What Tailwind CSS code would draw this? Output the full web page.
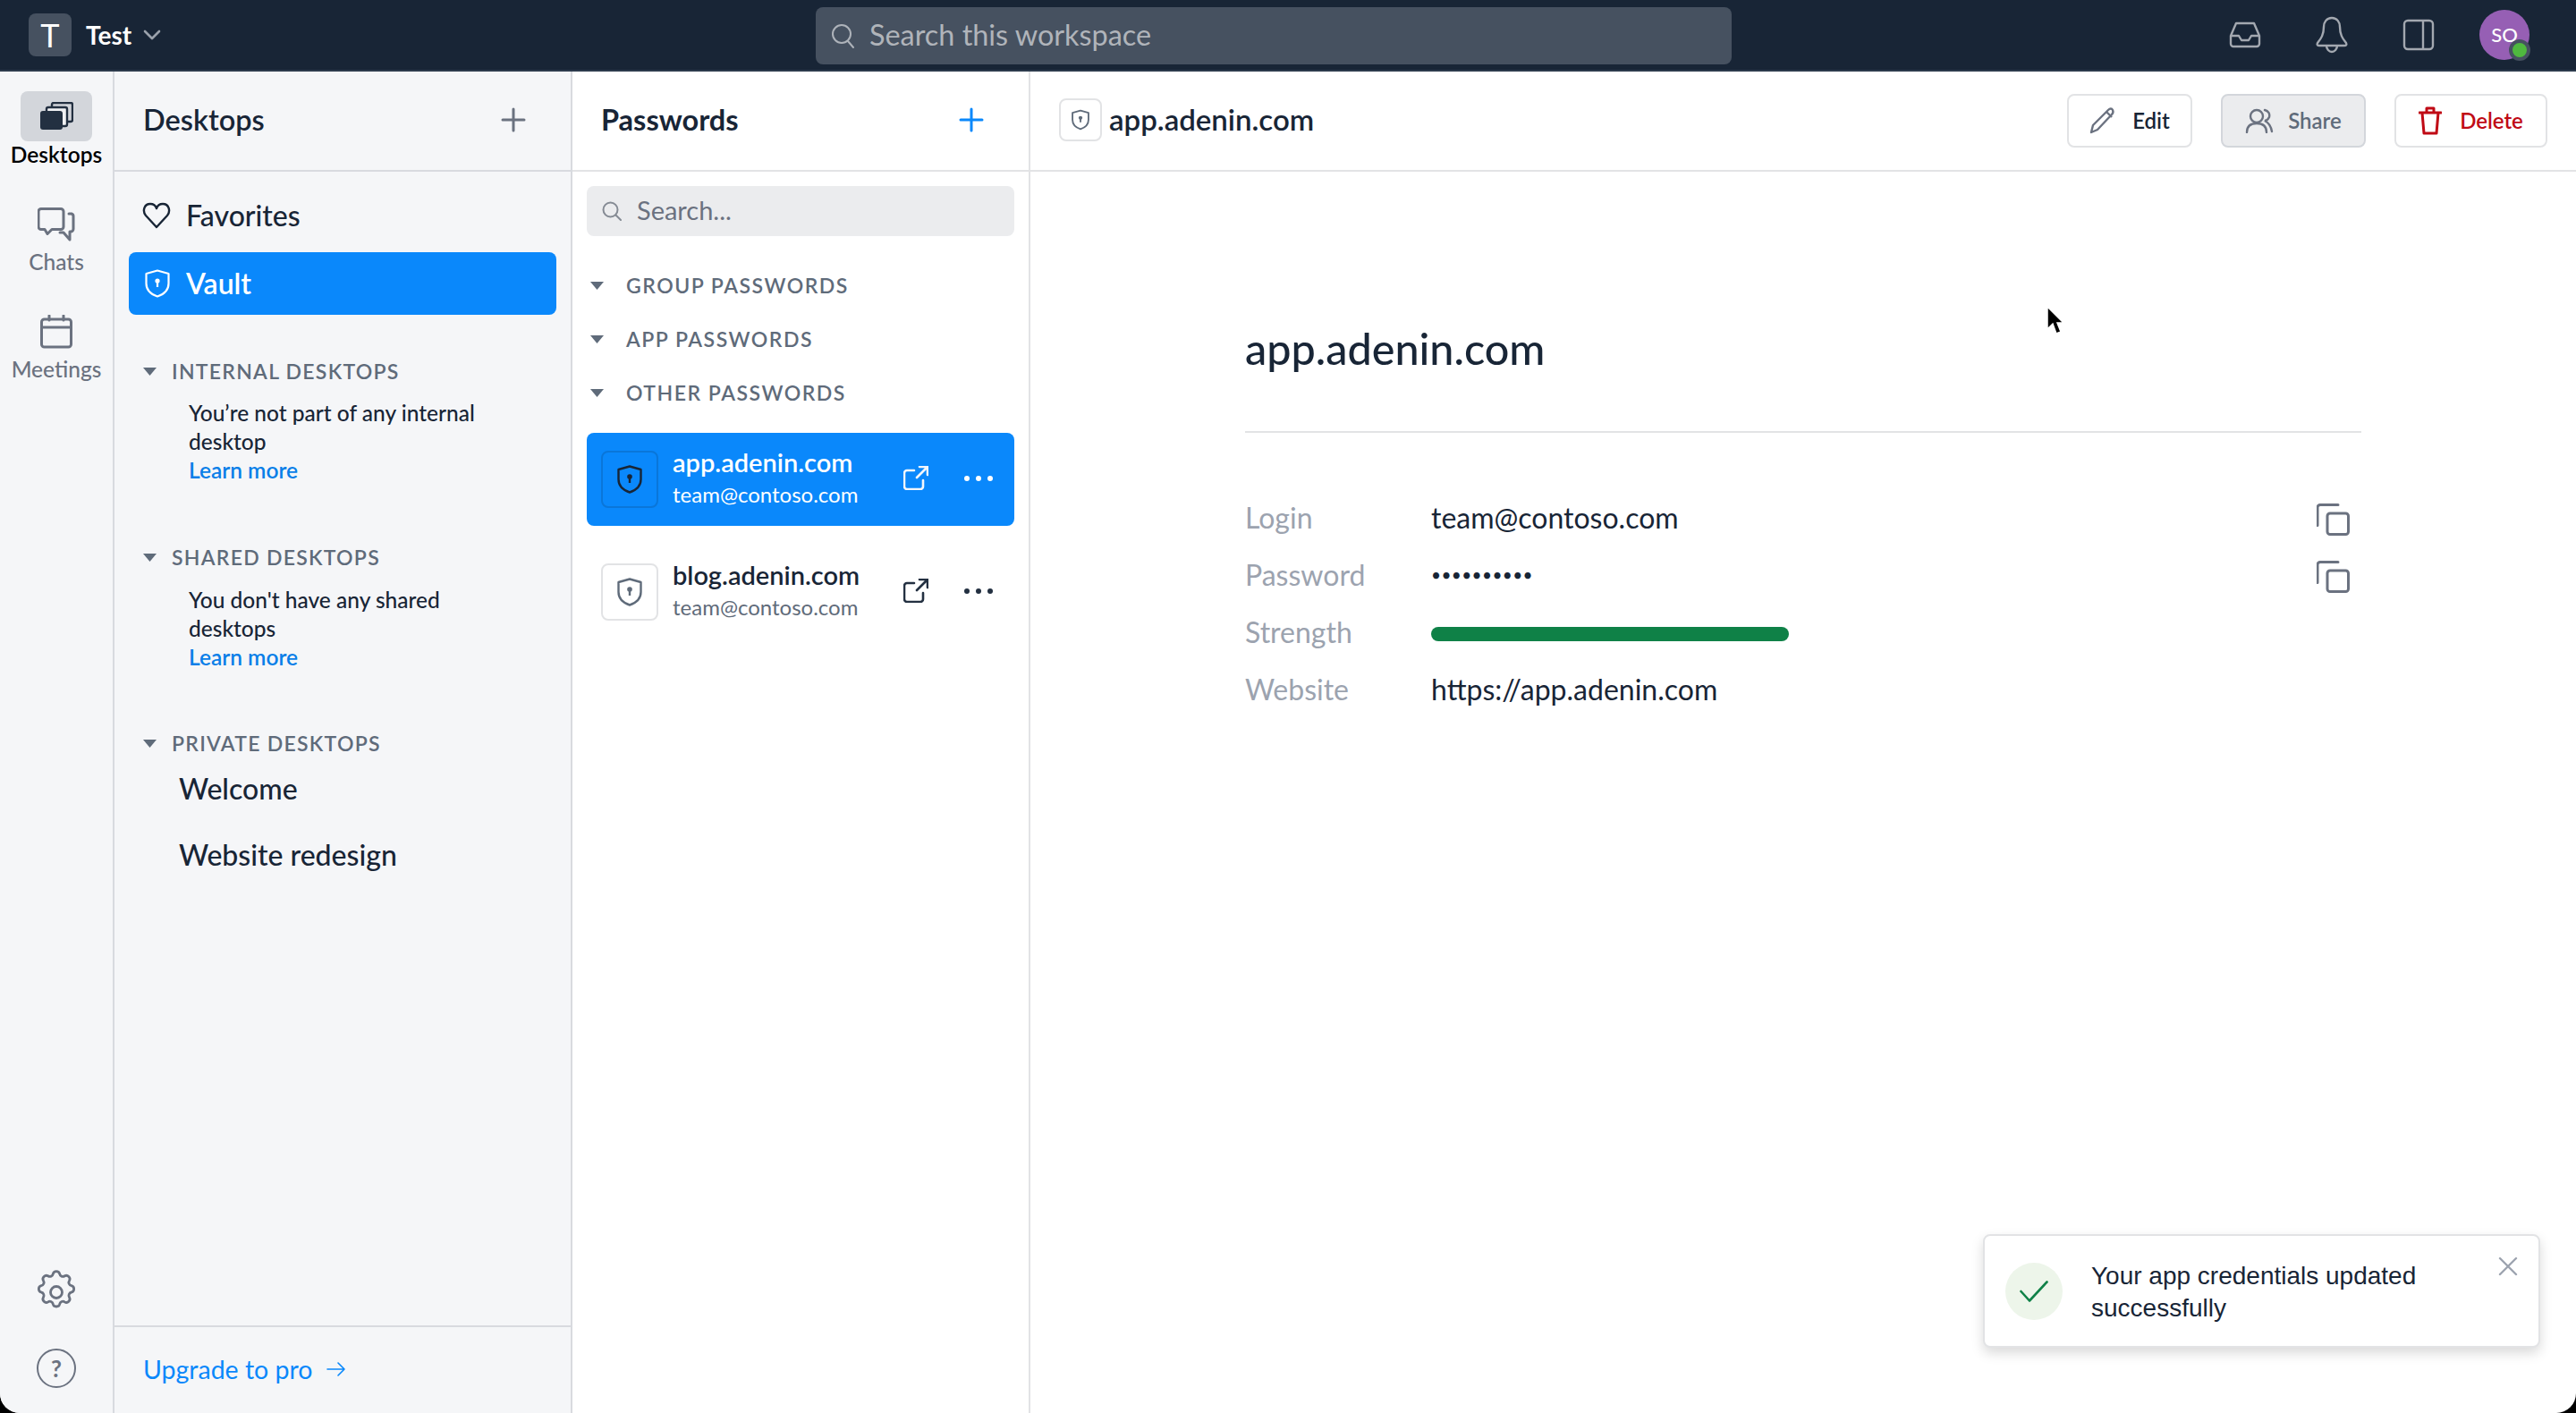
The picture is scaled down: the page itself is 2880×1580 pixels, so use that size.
<!doctype html>
<html><head><meta charset="utf-8"><script src="https://cdn.jsdelivr.net/npm/@tailwindcss/browser@4"></script></head>
<body class="bg-black m-0">
<div class="relative w-[2880px] h-[1580px] overflow-hidden bg-white rounded-b-[22px] flex flex-col font-['Lato',sans-serif] text-[#182536]">
  <!-- top bar -->
  <header class="h-[80px] shrink-0 bg-[#182536] border-b-2 border-[#2c3a4c] flex items-center pl-[32px] pr-[52px] relative">
    <div class="w-[48px] h-[48px] rounded-lg bg-[#465160] text-white text-[36px] flex items-center justify-center">T</div>
    <span class="ml-[16px] text-white text-[28px] font-bold">Test</span>
    <svg class="ml-[13px]" width="20" height="14" viewBox="0 0 20 14" fill="none" stroke="#9aa1ab" stroke-width="2.6" stroke-linecap="round" stroke-linejoin="round"><path d="M2 3l8 8 8-8"/></svg>
    <div class="absolute left-[912px] top-[8px] w-[1024px] h-[64px] rounded-lg bg-[#465160] flex items-center pl-[16px] gap-[14px]">
      <svg width="30" height="30" viewBox="0 0 30 30" fill="none" stroke="#aeb3ba" stroke-width="2" stroke-linecap="round"><circle cx="13" cy="13" r="10"/><path d="M20 21l6 7"/></svg>
      <span class="text-[32.400px] leading-[40px] pb-[3px] text-[#b0b4ba]">Search this workspace</span>
    </div>
    <div class="ml-auto flex items-center">
      <svg class="mr-[60px]" width="36" height="30" viewBox="0 0 36 30" fill="none" stroke="#a3a8b0" stroke-width="2.4" stroke-linejoin="round"><path d="M2 16 8 2h20l6 14v9a3 3 0 0 1-3 3H5a3 3 0 0 1-3-3z"/><path d="M2 16h9l3 5h8l3-5h9"/></svg>
      <svg class="mr-[60px]" width="38" height="42" viewBox="0 0 38 42" fill="none" stroke="#a3a8b0" stroke-width="2.4" stroke-linejoin="round"><path d="M19 2c-6 0-9 5-9 10 0 10-4 14-7 18-1 2 0 3 2 3h28c2 0 3-1 2-3-3-4-7-8-7-18 0-5-3-10-9-10z"/><path d="M13 33c0 4 3 7 6 7s6-3 6-7"/></svg>
      <svg class="mr-[50px]" width="36" height="36" viewBox="0 0 36 36" fill="none" stroke="#a3a8b0" stroke-width="2.4"><rect x="2" y="2" width="32" height="32" rx="4"/><path d="M23 2v32"/></svg>
      <div class="relative w-[56px] h-[56px] rounded-full bg-[#965fb4] text-white text-[22px] font-medium flex items-center justify-center pb-[2px]">SO
        <span class="absolute left-[33px] top-[33px] w-[24px] h-[24px] rounded-full bg-[#4fb83f] border-[4px] border-[#465160]"></span>
      </div>
    </div>
  </header>

  <div class="flex-1 flex min-h-0">
    <!-- rail -->
    <nav class="w-[128px] shrink-0 bg-[#f5f6f8] border-r-2 border-[#d8dadf] flex flex-col items-center text-[24.500px] font-medium text-[#6b7280]">
      <div class="mt-[22px] w-[80px] h-[56px] rounded-lg bg-[#d3d6db] flex items-center justify-center">
        <svg width="38" height="32" viewBox="0 0 38 32" fill="none"><rect x="14" y="1" width="23" height="21" rx="2" stroke="#233041" stroke-width="2.400"/><rect x="8" y="6" width="23" height="21" rx="2" fill="#f0f1f3" stroke="#233041" stroke-width="2.400"/><rect x="1" y="10" width="25" height="21" rx="3" fill="#233041"/></svg>
      </div>
      <span class="leading-[30px] font-semibold text-black">Desktops</span>
      <svg class="mt-[44px]" width="42" height="38" viewBox="0 0 42 38" fill="none" stroke="#6b7280" stroke-width="3" stroke-linejoin="round" stroke-linecap="round"><path d="M4 1.500h22a3 3 0 0 1 3 3v17a3 3 0 0 1-3 3H16l-5 5-3-5H4a3 3 0 0 1-3-3V4.500a3 3 0 0 1 3-3z"/><path d="M35 7h3a3 3 0 0 1 2 3v14a3 3 0 0 1-3 3h-1v9l-7-8h-4"/></svg>
      <span class="mt-[8px] leading-[30px]">Chats</span>
      <svg class="mt-[44px]" width="36" height="38" viewBox="0 0 36 38" fill="none" stroke="#6b7280" stroke-width="3" stroke-linecap="round"><rect x="1.500" y="5" width="33" height="31" rx="3"/><path d="M1.500 14h33M10 1v5M26 1v5"/></svg>
      <span class="mt-[8px] leading-[30px]">Meetings</span>
      <svg class="mt-auto" width="52" height="52" viewBox="0 0 24 24" fill="none" stroke="#6b7280" stroke-width="1.300" stroke-linejoin="round"><circle cx="12" cy="12" r="3"/><path d="M10.300 2.500c.4-1.700 3-1.700 3.400 0a1.700 1.700 0 0 0 2.600 1.100c1.500-.9 3.300.9 2.400 2.400a1.700 1.700 0 0 0 1.100 2.600c1.700.4 1.700 3 0 3.400a1.700 1.700 0 0 0-1.100 2.600c.9 1.500-.9 3.300-2.400 2.400a1.700 1.700 0 0 0-2.600 1.100c-.4 1.700-3 1.700-3.400 0a1.700 1.700 0 0 0-2.600-1.100c-1.500.9-3.300-.9-2.400-2.400a1.700 1.700 0 0 0-1.100-2.600c-1.700-.4-1.700-3 0-3.400a1.700 1.700 0 0 0 1.100-2.600c-.9-1.500.9-3.300 2.400-2.400a1.700 1.700 0 0 0 2.600-1.100z"/></svg>
      <div class="mt-[37px] mb-[28px] w-[44px] h-[44px] rounded-full border-[2.500px] border-[#6b7280] flex items-center justify-center text-[26px] font-bold">?</div>
    </nav>

    <!-- desktops column -->
    <aside class="w-[512px] shrink-0 bg-[#f5f6f8] border-r-2 border-[#d8dadf] flex flex-col">
      <div class="h-[112px] shrink-0 border-b-2 border-[#d8dadf] flex items-center justify-between pl-[32px] pr-[50px] pb-[2px]">
        <span class="text-[32.500px] font-semibold">Desktops</span>
        <svg width="28" height="28" viewBox="0 0 28 28" stroke="#6b7280" stroke-width="3" stroke-linecap="round"><path d="M14 2v24M2 14h24"/></svg>
      </div>
      <div class="flex-1 px-[16px] pt-[14px]">
        <div class="h-[70px] flex items-center pl-[15px] gap-[17px]">
          <svg width="32" height="30" viewBox="0 0 32 30" fill="none" stroke="#182536" stroke-width="2.400" stroke-linejoin="round"><path d="M16 28 4 15C0 10 2 2 9 2c3 0 6 2 7 5 1-3 4-5 7-5 7 0 9 8 5 13z"/></svg>
          <span class="text-[32px] font-medium">Favorites</span>
        </div>
        <div class="mt-[6px] h-[70px] rounded-lg bg-[#0a88fb] flex items-center pl-[18px] gap-[18px] text-white">
          <svg width="28" height="32" viewBox="0 0 28 32" fill="none"><path d="M14 1.500 26.500 5v11c0 7-5 12-12.500 14.500C6.500 28 1.500 23 1.500 16V5z" stroke="#fff" stroke-width="2.200" stroke-linejoin="round"/><circle cx="14" cy="13" r="2.600" fill="#fff"/><path d="M14 14v6" stroke="#fff" stroke-width="2.200"/></svg>
          <span class="text-[32px] font-semibold pb-[1px]">Vault</span>
        </div>
        <div class="mt-[48px] h-[30px] flex items-center pl-[16px] gap-[17px] text-[23px] font-semibold tracking-[0.055em] text-[#5f6b7a]">
          <svg width="15" height="9" viewBox="0 0 15 9" fill="#5f6b7a"><path d="M0 0h15L7.500 9z"/></svg>INTERNAL DESKTOPS
        </div>
        <div class="mt-[16px] ml-[67px] text-[24.500px] leading-[32px] font-medium w-[360px]">You’re not part of any internal desktop<br><span class="text-[#0a7fe8] font-semibold">Learn more</span></div>
        <div class="mt-[66px] h-[30px] flex items-center pl-[16px] gap-[17px] text-[23px] font-semibold tracking-[0.055em] text-[#5f6b7a]">
          <svg width="15" height="9" viewBox="0 0 15 9" fill="#5f6b7a"><path d="M0 0h15L7.500 9z"/></svg>SHARED DESKTOPS
        </div>
        <div class="mt-[17px] ml-[67px] text-[24.500px] leading-[32px] font-medium w-[340px]">You don't have any shared desktops<br><span class="text-[#0a7fe8] font-semibold">Learn more</span></div>
        <div class="mt-[65px] h-[30px] flex items-center pl-[16px] gap-[17px] text-[23px] font-semibold tracking-[0.055em] text-[#5f6b7a]">
          <svg width="15" height="9" viewBox="0 0 15 9" fill="#5f6b7a"><path d="M0 0h15L7.500 9z"/></svg>PRIVATE DESKTOPS
        </div>
        <div class="mt-[16px] ml-[56px] text-[32px] font-medium leading-[40px]">Welcome</div>
        <div class="mt-[34px] ml-[56px] text-[32px] font-medium leading-[40px]">Website redesign</div>
      </div>
      <div class="h-[98px] shrink-0 border-t-2 border-[#d8dadf] flex items-center pl-[32px] pb-[2px] gap-[16px] text-[28.500px] text-[#0a88fb]">
        Upgrade to pro
        <svg width="22" height="16" viewBox="0 0 22 16" fill="none" stroke="#0a88fb" stroke-width="1.600" stroke-linecap="round" stroke-linejoin="round"><path d="M1 8h19M13 1l7 7-7 7"/></svg>
      </div>
    </aside>

    <!-- passwords column -->
    <section class="w-[512px] shrink-0 border-r-2 border-[#e2e3e5] flex flex-col">
      <div class="h-[112px] shrink-0 border-b-2 border-[#e2e3e5] flex items-center justify-between pl-[32px] pr-[50px] pb-[2px]">
        <span class="text-[32.500px] font-bold">Passwords</span>
        <svg width="28" height="28" viewBox="0 0 28 28" stroke="#0a88fb" stroke-width="3" stroke-linecap="round"><path d="M14 2v24M2 14h24"/></svg>
      </div>
      <div class="px-[16px] pt-[16px]">
        <div class="h-[56px] rounded-lg bg-[#ebecee] flex items-center pl-[17px] gap-[17px]">
          <svg width="22" height="22" viewBox="0 0 22 22" fill="none" stroke="#858b94" stroke-width="2" stroke-linecap="round"><circle cx="9.500" cy="9.500" r="8"/><path d="M15.500 15.500l5.500 5.500"/></svg>
          <span class="text-[29px] text-[#6b7280] pb-[3px]">Search...</span>
        </div>
        <div class="mt-[40px] h-[30px] flex items-center pl-[4px] gap-[25px] text-[23px] font-semibold tracking-[0.065em] text-[#5f6b7a]"><svg width="15" height="9" viewBox="0 0 15 9" fill="#5f6b7a"><path d="M0 0h15L7.500 9z"/></svg>GROUP PASSWORDS</div>
        <div class="mt-[30px] h-[30px] flex items-center pl-[4px] gap-[25px] text-[23px] font-semibold tracking-[0.065em] text-[#5f6b7a]"><svg width="15" height="9" viewBox="0 0 15 9" fill="#5f6b7a"><path d="M0 0h15L7.500 9z"/></svg>APP PASSWORDS</div>
        <div class="mt-[30px] h-[30px] flex items-center pl-[4px] gap-[25px] text-[23px] font-semibold tracking-[0.065em] text-[#5f6b7a]"><svg width="15" height="9" viewBox="0 0 15 9" fill="#5f6b7a"><path d="M0 0h15L7.500 9z"/></svg>OTHER PASSWORDS</div>

        <div class="mt-[30px] h-[104px] rounded-lg bg-[#0a88fb] flex items-center pl-[16px] text-white">
          <div class="w-[64px] h-[64px] rounded-lg border-2 border-[#0a76d9] flex items-center justify-center">
            <svg width="28" height="32" viewBox="0 0 28 32" fill="none"><path d="M14 1.500 26.500 5v11c0 7-5 12-12.500 14.500C6.500 28 1.500 23 1.500 16V5z" stroke="#182536" stroke-width="2.400" stroke-linejoin="round"/><circle cx="14" cy="13" r="2.800" fill="#182536"/><path d="M14 14v6" stroke="#182536" stroke-width="2.400"/></svg>
          </div>
          <div class="ml-[16px] w-[258px] pb-[3px]">
            <div class="text-[29px] font-semibold leading-[36px]">app.adenin.com</div>
            <div class="text-[24px] leading-[36px]">team@contoso.com</div>
          </div>
          <svg class="mb-[3px]" width="28" height="27" viewBox="0 0 28 27" fill="none" stroke="#f2f6fb" stroke-width="2.600" stroke-linecap="round" stroke-linejoin="round"><path d="M12 5H4a3 3 0 0 0-3 3v15a3 3 0 0 0 3 3h15a3 3 0 0 0 3-3v-7"/><path d="M15 13 27 1M18 1h9v9"/></svg>
          <svg class="ml-[40px] mb-[3px]" width="32" height="6" viewBox="0 0 32 6" fill="#fff"><circle cx="3" cy="3" r="3"/><circle cx="16" cy="3" r="3"/><circle cx="29" cy="3" r="3"/></svg>
        </div>
        <div class="mt-[22px] h-[104px] rounded-lg flex items-center pl-[16px]">
          <div class="w-[64px] h-[64px] rounded-lg bg-white border-2 border-[#e2e3e5] flex items-center justify-center">
            <svg width="28" height="32" viewBox="0 0 28 32" fill="none"><path d="M14 1.500 26.500 5v11c0 7-5 12-12.500 14.500C6.500 28 1.500 23 1.500 16V5z" stroke="#5f6b7a" stroke-width="2.400" stroke-linejoin="round"/><circle cx="14" cy="13" r="2.800" fill="#5f6b7a"/><path d="M14 14v6" stroke="#5f6b7a" stroke-width="2.400"/></svg>
          </div>
          <div class="ml-[16px] w-[258px] pb-[3px]">
            <div class="text-[29px] font-semibold leading-[36px]">blog.adenin.com</div>
            <div class="text-[24px] leading-[36px] text-[#5f6b7a]">team@contoso.com</div>
          </div>
          <svg class="mb-[3px]" width="28" height="27" viewBox="0 0 28 27" fill="none" stroke="#233041" stroke-width="2.600" stroke-linecap="round" stroke-linejoin="round"><path d="M12 5H4a3 3 0 0 0-3 3v15a3 3 0 0 0 3 3h15a3 3 0 0 0 3-3v-7"/><path d="M15 13 27 1M18 1h9v9"/></svg>
          <svg class="ml-[40px] mb-[3px]" width="32" height="6" viewBox="0 0 32 6" fill="#233041"><circle cx="3" cy="3" r="3"/><circle cx="16" cy="3" r="3"/><circle cx="29" cy="3" r="3"/></svg>
        </div>
      </div>
    </section>

    <!-- detail -->
    <main class="flex-1 min-w-0 flex flex-col">
      <div class="h-[112px] shrink-0 border-b-2 border-[#e2e3e5] flex items-center pl-[32px] pr-[32px] pb-[2px]">
        <div class="w-[48px] h-[48px] rounded-lg border-2 border-[#e2e3e5] flex items-center justify-center">
          <svg width="20" height="24" viewBox="0 0 28 32" fill="none"><path d="M14 1.500 26.500 5v11c0 7-5 12-12.500 14.500C6.500 28 1.500 23 1.500 16V5z" stroke="#5f6b7a" stroke-width="2.600" stroke-linejoin="round"/><circle cx="14" cy="13" r="3" fill="#5f6b7a"/><path d="M14 14v6" stroke="#5f6b7a" stroke-width="2.600"/></svg>
        </div>
        <span class="ml-[8px] text-[33px] font-semibold">app.adenin.com</span>
        <div class="ml-auto mt-[2px] flex items-center gap-[32px] text-[24px] font-semibold">
          <div class="h-[60px] w-[140px] rounded-lg border-2 border-[#e2e3e5] flex items-center justify-center gap-[18px]">
            <svg width="30" height="30" viewBox="0 0 30 30" fill="none" stroke="#6b7280" stroke-width="2.400" stroke-linejoin="round"><path d="M2 28l2-8L21 3c2-2 4-2 5 0s1 3-1 5L9 25z"/><path d="M19 5l6 6"/></svg>Edit
          </div>
          <div class="h-[60px] w-[162px] rounded-lg bg-[#ebecee] border-2 border-[#d3d6db] text-[#5f6b7a] flex items-center justify-center gap-[16px]">
            <svg width="32" height="28" viewBox="0 0 32 28" fill="none" stroke="#6b7280" stroke-width="2.400" stroke-linecap="round"><circle cx="13" cy="9" r="7"/><path d="M2 27c0-7 4-10 11-10s11 3 11 10M22 2c4 1 6 4 5 8-1 2-3 4-5 4 4 2 7 6 8 12"/></svg>Share
          </div>
          <div class="h-[60px] w-[171px] rounded-lg border-2 border-[#e2e3e5] text-[#c00a15] flex items-center justify-center gap-[20px]">
            <svg width="26" height="32" viewBox="0 0 26 32" fill="none" stroke="#c00a15" stroke-width="3" stroke-linecap="round" stroke-linejoin="round"><path d="M1 7h24M9 7V2h8v5M4 7l2 23h14l2-23"/></svg>Delete
          </div>
        </div>
      </div>
      <div class="pl-[240px] pr-[240px] pt-[167px]">
        <h1 class="text-[48.500px] font-medium leading-[60px] pb-[63px] border-b-2 border-[#e2e3e5]">app.adenin.com</h1>
        <div class="mt-[63px] flex flex-col text-[32px] leading-[64px]">
          <div class="flex items-center h-[64px]"><span class="w-[208px] text-[#9ca3af]">Login</span><span>team@contoso.com</span>
            <svg class="ml-auto mr-[13px] mt-[4px]" width="37" height="36" viewBox="0 0 37 36" fill="none" stroke="#6b7280" stroke-width="3" stroke-linejoin="round" stroke-linecap="round"><path d="M24 1.500H4a3 3 0 0 0-3 3v20"/><rect x="12" y="11" width="23.500" height="23.500" rx="3"/></svg></div>
          <div class="flex items-center h-[64px]"><span class="w-[208px] text-[#9ca3af]">Password</span><span class="text-[19px] tracking-[0.02em]">••••••••••</span>
            <svg class="ml-auto mr-[13px] mt-[4px]" width="37" height="36" viewBox="0 0 37 36" fill="none" stroke="#6b7280" stroke-width="3" stroke-linejoin="round" stroke-linecap="round"><path d="M24 1.500H4a3 3 0 0 0-3 3v20"/><rect x="12" y="11" width="23.500" height="23.500" rx="3"/></svg></div>
          <div class="flex items-center h-[64px]"><span class="w-[208px] text-[#9ca3af]">Strength</span><div class="mt-[4px] w-[400px] h-[16px] rounded-full bg-[#0f8147]"></div></div>
          <div class="flex items-center h-[64px]"><span class="w-[208px] text-[#9ca3af]">Website</span><span>https://app.adenin.com</span></div>
        </div>
      </div>
    </main>
  </div>

  <!-- toast -->
  <div class="absolute left-[2217px] top-[1380px] w-[623px] h-[127px] rounded-lg bg-white border-2 border-[#e2e3e5] shadow-[0_6px_14px_rgba(0,0,0,0.15)] flex items-center pl-[23px] font-['Liberation_Sans',sans-serif]">
    <div class="w-[64px] h-[64px] rounded-full bg-[#edf5ea] flex items-center justify-center">
      <svg width="32" height="24" viewBox="0 0 32 24" fill="none" stroke="#0f8147" stroke-width="2.600" stroke-linecap="round" stroke-linejoin="round"><path d="M1.500 12 11 22.500 30.500 1.500"/></svg>
    </div>
    <div class="ml-[32px] mt-[2px] w-[420px] text-[28px] leading-[36px]">Your app credentials updated successfully</div>
    <svg class="absolute right-[23px] top-[23px]" width="22" height="22" viewBox="0 0 22 22" stroke="#9ca3af" stroke-width="2.400" stroke-linecap="round"><path d="M2 2l18 18M20 2 2 20"/></svg>
  </div>

  <!-- cursor -->
  <svg class="absolute left-[2288px] top-[342px]" width="20" height="34" viewBox="0 0 20 34"><path d="M1 1v25l6-6 4 11 5-2-4-10h7z" fill="#000" stroke="#fff" stroke-width="1.500"/></svg>
</div>
</body></html>
